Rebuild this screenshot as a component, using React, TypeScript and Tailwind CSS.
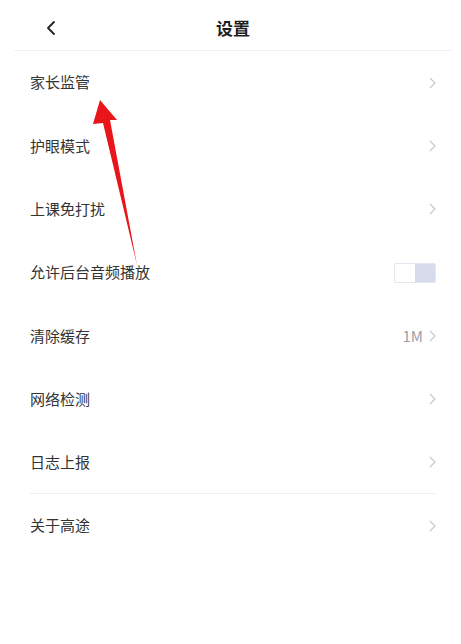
import { ChevronLeft } from 'lucide-react'

const rows = [
  { label: '家长监管' },
  { label: '护眼模式' },
  { label: '上课免打扰' },
  { label: '允许后台音频播放', toggle: true },
  { label: '清除缓存', value: '1M' },
  { label: '网络检测' },
  { label: '日志上报', divider: true },
  { label: '关于高途' },
]

function Chevron() {
  return (
    <svg width="7" height="12" viewBox="0 0 7 12" className="shrink-0">
      <path d="M1 1l5 5-5 5" fill="none" stroke="#c8c8cc" strokeWidth="1.2" />
    </svg>
  )
}

function Toggle() {
  return (
    <div className="flex h-[20px] w-[42px] overflow-hidden rounded-[2px] border border-[#e4e6ef]">
      <div className="flex-1 bg-white" />
      <div className="flex-1 bg-[#d8dbeb]" />
    </div>
  )
}

export default function App() {
  return (
    <div
      className="relative h-[644px] w-[461px] overflow-hidden bg-white"
      style={{ fontFamily: '"Noto Sans CJK SC", "Noto Sans", sans-serif' }}
    >
      {/* Header */}
      <div className="ml-[14px] mr-[9px] flex h-[51px] items-center border-b border-[#f1f1f3] pt-[5px]">
        <div className="flex w-[60px] items-center pl-[25px]">
          <ChevronLeft size={24} strokeWidth={1.8} className="text-[#222]" />
        </div>
        <div className="flex-1 text-center text-[17px] font-bold text-[#1f1f1f]">设置</div>
        <div className="w-[60px]" />
      </div>

      {/* Rows */}
      <div className="pl-[30px] pr-[25px]">
        {rows.map((r) => (
          <div
            key={r.label}
            className={`flex h-[63.3px] items-center justify-between ${r.divider ? 'border-b border-[#efeff2]' : ''}`}
          >
            <span className="text-[15px] text-[#333]">{r.label}</span>
            {r.toggle ? (
              <Toggle />
            ) : (
              <div className="flex items-center gap-[6px]">
                {r.value && <span className="text-[15px] text-[#a0a0a6]">{r.value}</span>}
                <Chevron />
              </div>
            )}
          </div>
        ))}
      </div>

      {/* Red arrow annotation */}
      <svg className="pointer-events-none absolute left-0 top-0" width="461" height="644" viewBox="0 0 461 644">
        <path d="M100 100 L117 120 L110 120 L137 265 L103 123 L93 124 Z" fill="#e8151b" />
      </svg>
    </div>
  )
}
